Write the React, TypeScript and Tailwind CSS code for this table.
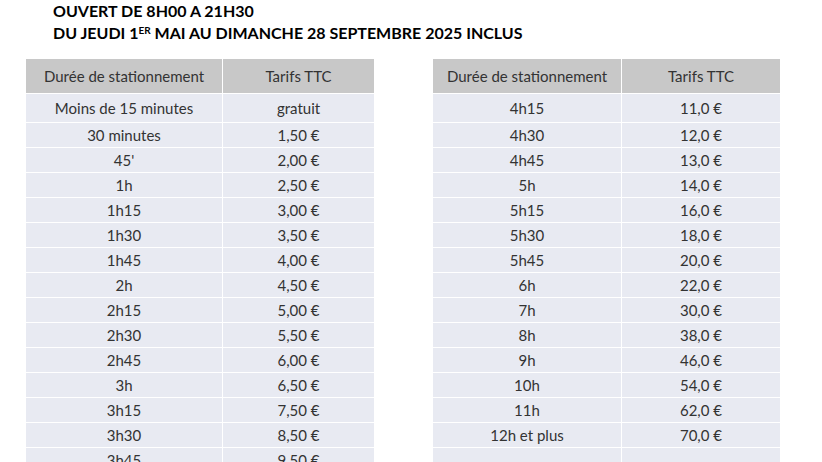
import React from "react";

const left: [string, string][] = [
  ["Moins de 15 minutes", "gratuit"],
  ["30 minutes", "1,50 €"],
  ["45'", "2,00 €"],
  ["1h", "2,50 €"],
  ["1h15", "3,00 €"],
  ["1h30", "3,50 €"],
  ["1h45", "4,00 €"],
  ["2h", "4,50 €"],
  ["2h15", "5,00 €"],
  ["2h30", "5,50 €"],
  ["2h45", "6,00 €"],
  ["3h", "6,50 €"],
  ["3h15", "7,50 €"],
  ["3h30", "8,50 €"],
  ["3h45", "9,50 €"],
];

const right: [string, string][] = [
  ["4h15", "11,0 €"],
  ["4h30", "12,0 €"],
  ["4h45", "13,0 €"],
  ["5h", "14,0 €"],
  ["5h15", "16,0 €"],
  ["5h30", "18,0 €"],
  ["5h45", "20,0 €"],
  ["6h", "22,0 €"],
  ["7h", "30,0 €"],
  ["8h", "38,0 €"],
  ["9h", "46,0 €"],
  ["10h", "54,0 €"],
  ["11h", "62,0 €"],
  ["12h et plus", "70,0 €"],
  ["", ""],
];

function Table({
  rows,
  c1,
  c2,
}: {
  rows: [string, string][];
  c1: string;
  c2: string;
}) {
  return (
    <div className="flex flex-col gap-px">
      <div className="flex gap-px h-[34px] text-[15px]">
        <div className={`${c1} bg-[#c8c8c8] flex items-center justify-center`}>
          Durée de stationnement
        </div>
        <div className={`${c2} bg-[#c8c8c8] flex items-center justify-center`}>
          Tarifs TTC
        </div>
      </div>
      {rows.map(([a, b], i) => (
        <div
          key={i}
          className={`flex gap-px text-[15px] ${i === 0 ? "h-[28px]" : "h-[24px]"}`}
        >
          <div className={`${c1} bg-[#e8eaf2] flex items-center justify-center`}>
            {a}
          </div>
          <div className={`${c2} bg-[#e8eaf2] flex items-center justify-center`}>
            {b}
          </div>
        </div>
      ))}
    </div>
  );
}

export default function App() {
  return (
    <div
      className="w-[822px] h-[462px] overflow-hidden bg-white text-[#333333]"
      style={{ fontFamily: "Lato, 'Open Sans', sans-serif" }}
    >
      <div className="pl-[53px] pt-0 text-black font-bold text-[16px] leading-[22px]">
        <div>OUVERT DE 8H00 A 21H30</div>
        <div>
          DU JEUDI 1<sup className="text-[10px]">ER</sup> MAI AU DIMANCHE 28
          SEPTEMBRE 2025 INCLUS
        </div>
      </div>
      <div className="flex mt-[15px] pl-[26px] gap-[59px]">
        <Table rows={left} c1="w-[196px]" c2="w-[151px]" />
        <Table rows={right} c1="w-[188px]" c2="w-[158px]" />
      </div>
    </div>
  );
}
